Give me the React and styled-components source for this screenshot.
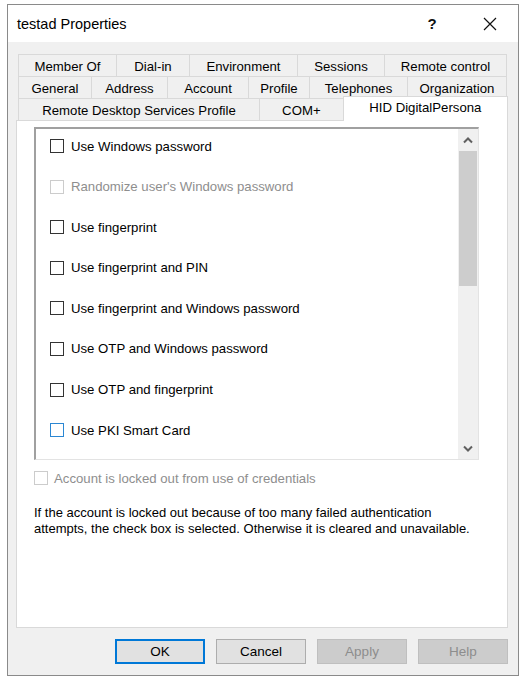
import React from "react";
import styled, {createGlobalStyle} from "styled-components";

const Global = createGlobalStyle`
  html, body {
    margin: 0;
    padding: 0;
    background: #fff;
  }
  body {
    font-family: "Liberation Sans", Arial, sans-serif;
    font-size: 13.2px;
    color: #000;
  }
`;

const Page = styled.div`
  padding: 4px 6px 0 7px;
`;

const Window = styled.div`
  display: flex;
  flex-direction: column;
  width: 510px;
  height: 670px;
  border: 1px solid #8a8a8a;
  background: #f0f0f0;
`;

const TitleBar = styled.div`
  display: flex;
  align-items: center;
  height: 37px;
  padding: 0 5px 0 9px;
  background: #fff;
  font-size: 14.5px;
`;

const Title = styled.div`
  flex: 1;
  padding-top: 1px;
`;

const TitleButton = styled.div`
  display: flex;
  align-items: center;
  justify-content: center;
  width: ${(p) => p.$w}px;
  height: 37px;
  font-size: 15px;
  font-weight: bold;
  color: #111;
`;

const Body = styled.div`
  flex: 1;
  display: flex;
  flex-direction: column;
  padding: 12px 10px 0 8px;
`;

const TabRow = styled.div`
  display: flex;
  align-items: flex-end;
  height: 22px;
  padding-left: 2px;
`;

const Tab = styled.div`
  display: flex;
  align-items: center;
  justify-content: center;
  box-sizing: border-box;
  width: ${(p) => p.$w}px;
  height: 22px;
  padding-top: 2px;
  border: 1px solid #d9d9d9;
  border-bottom: none;
  margin-left: -1px;
  background: #f0f0f0;
  white-space: nowrap;
  &:first-child {
    margin-left: 0;
  }
`;

const ActiveTab = styled(Tab)`
  position: relative;
  z-index: 2;
  height: 25px;
  margin-bottom: -1px;
  padding: 0 0 3px;
  background: #fff;
`;

const Panel = styled.div`
  flex: 1;
  display: flex;
  flex-direction: column;
  box-sizing: border-box;
  border: 1px solid #d9d9d9;
  background: #fff;
  padding: 6px 28px 0 17px;
`;

const ListBox = styled.div`
  display: flex;
  height: 333px;
  box-sizing: border-box;
  border-top: 2px solid #a0a0a0;
  border-left: 2px solid #a0a0a0;
  border-right: 1px solid #e3e3e3;
  border-bottom: 1px solid #e3e3e3;
`;

const Items = styled.div`
  flex: 1;
  display: flex;
  flex-direction: column;
  gap: 20.6px;
  padding: 7px 0 0 14px;
`;

const Item = styled.label`
  display: flex;
  align-items: center;
  gap: 7px;
  height: 20px;
  color: ${(p) => (p.$disabled ? "#8e8e8e" : "#000")};
`;

const Box = styled.span`
  flex: none;
  box-sizing: border-box;
  width: 14px;
  height: 14px;
  background: #fff;
  border: 1px solid
    ${(p) => (p.$disabled ? "#cccccc" : p.$hot ? "#2b87d3" : "#333")};
`;

const ScrollBar = styled.div`
  display: flex;
  flex-direction: column;
  width: 20px;
  background: #f0f0f0;
`;

const Arrow = styled.div`
  display: flex;
  align-items: center;
  justify-content: center;
  height: 22px;
`;

const Thumb = styled.div`
  height: 135px;
  margin: 0 1px;
  background: #cdcdcd;
`;

const Track = styled.div`
  flex: 1;
`;

const Locked = styled.label`
  display: flex;
  align-items: center;
  gap: 6px;
  margin-top: 10px;
  height: 16px;
  color: #8e8e8e;
`;

const Note = styled.p`
  margin: 19px -20px 0 0;
  line-height: 16px;
  font-size: 13px;
`;

const Buttons = styled.div`
  display: flex;
  justify-content: flex-end;
  gap: 11px;
  padding: 11px 0 11px;
`;

const Button = styled.button`
  box-sizing: border-box;
  width: 90px;
  height: 25px;
  font-family: inherit;
  font-size: 13.5px;
  background: ${(p) => (p.disabled ? "#cccccc" : "#e1e1e1")};
  color: ${(p) => (p.disabled ? "#8d8d8d" : "#000")};
  border: ${(p) =>
    p.$default ? "2px solid #0078d7" : p.disabled ? "1px solid #bfbfbf" : "1px solid #adadad"};
  padding: 0;
`;

const rowOne = [
  ["Member Of", 99],
  ["Dial-in", 74],
  ["Environment", 109],
  ["Sessions", 88],
  ["Remote control", 123],
];

const rowTwo = [
  ["General", 74],
  ["Address", 77],
  ["Account", 82],
  ["Profile", 62],
  ["Telephones", 99],
  ["Organization", 100],
];

const options = [
  {label: "Use Windows password"},
  {label: "Randomize user's Windows password", disabled: true},
  {label: "Use fingerprint"},
  {label: "Use fingerprint and PIN"},
  {label: "Use fingerprint and Windows password"},
  {label: "Use OTP and Windows password"},
  {label: "Use OTP and fingerprint"},
  {label: "Use PKI Smart Card", hot: true},
];

function Chevron({down}) {
  return (
    <svg width="10" height="7" viewBox="0 0 10 7">
      <polyline
        points={down ? "1,1.5 5,5.5 9,1.5" : "1,5.5 5,1.5 9,5.5"}
        fill="none"
        stroke="#606060"
        strokeWidth="2"
      />
    </svg>
  );
}

export default function App() {
  return (
    <Page>
      <Global />
      <Window>
        <TitleBar>
          <Title>testad Properties</Title>
          <TitleButton $w={30}>?</TitleButton>
          <TitleButton $w={46} style={{marginLeft: 20}}>
            <svg width="14" height="14" viewBox="0 0 14 14">
              <path d="M1 1 L13 13 M13 1 L1 13" stroke="#111" strokeWidth="1.2" />
            </svg>
          </TitleButton>
        </TitleBar>
        <Body>
          <TabRow>
            {rowOne.map(([t, w]) => (
              <Tab key={t} $w={w}>{t}</Tab>
            ))}
          </TabRow>
          <TabRow>
            {rowTwo.map(([t, w]) => (
              <Tab key={t} $w={w}>{t}</Tab>
            ))}
          </TabRow>
          <TabRow>
            <Tab $w={243}>Remote Desktop Services Profile</Tab>
            <Tab $w={85}>COM+</Tab>
            <ActiveTab $w={166}>HID DigitalPersona</ActiveTab>
          </TabRow>
          <Panel>
            <ListBox>
              <Items>
                {options.map((o) => (
                  <Item key={o.label} $disabled={o.disabled}>
                    <Box $disabled={o.disabled} $hot={o.hot} />
                    {o.label}
                  </Item>
                ))}
              </Items>
              <ScrollBar>
                <Arrow>
                  <Chevron />
                </Arrow>
                <Thumb />
                <Track />
                <Arrow>
                  <Chevron down />
                </Arrow>
              </ScrollBar>
            </ListBox>
            <Locked>
              <Box $disabled />
              Account is locked out from use of credentials
            </Locked>
            <Note>
              If the account is locked out because of too many failed authentication
              <br />
              attempts, the check box is selected. Otherwise it is cleared and unavailable.
            </Note>
          </Panel>
          <Buttons>
            <Button $default>OK</Button>
            <Button>Cancel</Button>
            <Button disabled>Apply</Button>
            <Button disabled>Help</Button>
          </Buttons>
        </Body>
      </Window>
    </Page>
  );
}
